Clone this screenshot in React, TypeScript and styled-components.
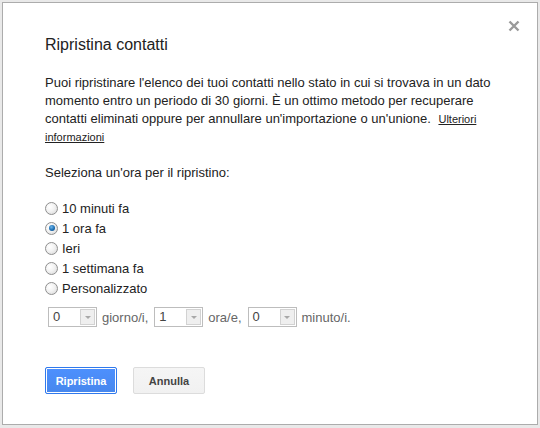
import { createGlobalStyle } from "styled-components";
import styled from "styled-components";

const GlobalStyle = createGlobalStyle`
  html, body {
    margin: 0;
    padding: 0;
    background: #e9e9e9;
  }
  body {
    font-family: "Liberation Sans", Arial, sans-serif;
    color: #222;
  }
`;

const Page = styled.div`
  width: 540px;
  height: 428px;
  padding: 2px 0 0 2px;
  box-sizing: border-box;
`;

const Dialog = styled.div`
  width: 536px;
  height: 423px;
  box-sizing: border-box;
  background: #fff;
  border: 1px solid #acacac;
  position: relative;
  padding: 32px 42px 0 42px;
`;

const Close = styled.div`
  position: absolute;
  top: 15px;
  right: 17px;
  width: 12px;
  height: 12px;
`;

const Title = styled.h2`
  margin: 0;
  font-size: 16px;
  font-weight: normal;
  color: #222;
  line-height: 20px;
`;

const Text = styled.p`
  margin: 19px 0 0 0;
  font-size: 13px;
  line-height: 18px;
  width: 450px;
  color: #222;
`;

const MoreLink = styled.a`
  font-size: 11px;
  color: #222;
  text-decoration: underline;
  margin-left: 4px;
  line-height: 15px;
`;

const Label = styled.div`
  margin-top: 18px;
  font-size: 13px;
  line-height: 18px;
`;

const RadioList = styled.div`
  margin-top: 16px;
  display: flex;
  flex-direction: column;
`;

const RadioRow = styled.label`
  display: flex;
  align-items: center;
  height: 20px;
  font-size: 13px;
`;

const RadioDot = styled.span<{ $on?: boolean }>`
  width: 11px;
  height: 11px;
  border-radius: 50%;
  border: 1px solid #8f8f8f;
  background: radial-gradient(circle at 35% 35%, #ffffff 0%, #f2f2f2 45%, #d4d4d4 100%);
  margin-right: 4px;
  display: flex;
  align-items: center;
  justify-content: center;
  box-sizing: content-box;
  &::after {
    content: "";
    display: ${(p) => (p.$on ? "block" : "none")};
    width: 6px;
    height: 6px;
    border-radius: 50%;
    background: radial-gradient(circle at 40% 35%, #6fb6ec 0%, #1c6fb3 55%, #0b3f74 100%);
  }
`;

const TimeRow = styled.div`
  margin-top: 9px;
  margin-left: 3px;
  display: flex;
  align-items: center;
  font-size: 13px;
  color: #666;
`;

const Select = styled.div`
  width: 47px;
  height: 18px;
  border: 1px solid #bdbdbd;
  display: flex;
  background: #fff;
  margin-right: 5px;
`;

const SelectValue = styled.span`
  flex: 1;
  padding-left: 4px;
  line-height: 18px;
  color: #444;
`;

const SelectArrow = styled.span`
  width: 15px;
  margin: 1px;
  background: #efefef;
  border: 1px solid #d2d2d2;
  box-sizing: border-box;
  display: flex;
  align-items: center;
  justify-content: center;
  &::after {
    content: "";
    border-left: 3px solid transparent;
    border-right: 3px solid transparent;
    border-top: 3px solid #a8a8a8;
  }
`;

const Unit = styled.span`
  margin-right: 6px;
`;

const Buttons = styled.div`
  margin-top: 40px;
  display: flex;
  gap: 16px;
`;

const Button = styled.button<{ $primary?: boolean }>`
  height: 27px;
  min-width: 72px;
  padding: 0 8px;
  font-family: "Liberation Sans", Arial, sans-serif;
  font-size: 11px;
  font-weight: bold;
  border-radius: 2px;
  border: 1px solid ${(p) => (p.$primary ? "#3079ed" : "#dcdcdc")};
  color: ${(p) => (p.$primary ? "#fff" : "#444")};
  background: ${(p) =>
    p.$primary
      ? "linear-gradient(#4d90fe, #4787ed)"
      : "linear-gradient(#f5f5f5, #f1f1f1)"};
  box-shadow: ${(p) => (p.$primary ? "inset 0 0 0 1px #fff" : "none")};
`;

const options = ["10 minuti fa", "1 ora fa", "Ieri", "1 settimana fa", "Personalizzato"];

const App = () => {
  return (
    <Page>
      <GlobalStyle />
      <Dialog>
        <Close>
          <svg width="12" height="12" viewBox="0 0 12 12">
            <path d="M1.5 1.5 L10.5 10.5 M10.5 1.5 L1.5 10.5" stroke="#9a9a9a" strokeWidth="2.4" />
          </svg>
        </Close>
        <Title>Ripristina contatti</Title>
        <Text>
          Puoi ripristinare l'elenco dei tuoi contatti nello stato in cui si trovava in un dato
          momento entro un periodo di 30 giorni. È un ottimo metodo per recuperare contatti
          eliminati oppure per annullare un'importazione o un'unione.{" "}
          <MoreLink href="#">Ulteriori informazioni</MoreLink>
        </Text>
        <Label>Seleziona un'ora per il ripristino:</Label>
        <RadioList>
          {options.map((o, i) => (
            <RadioRow key={o}>
              <RadioDot $on={i === 1} />
              {o}
            </RadioRow>
          ))}
        </RadioList>
        <TimeRow>
          <Select>
            <SelectValue>0</SelectValue>
            <SelectArrow />
          </Select>
          <Unit>giorno/i,</Unit>
          <Select>
            <SelectValue>1</SelectValue>
            <SelectArrow />
          </Select>
          <Unit>ora/e,</Unit>
          <Select>
            <SelectValue>0</SelectValue>
            <SelectArrow />
          </Select>
          <Unit>minuto/i.</Unit>
        </TimeRow>
        <Buttons>
          <Button $primary>Ripristina</Button>
          <Button>Annulla</Button>
        </Buttons>
      </Dialog>
    </Page>
  );
};

export default App;
